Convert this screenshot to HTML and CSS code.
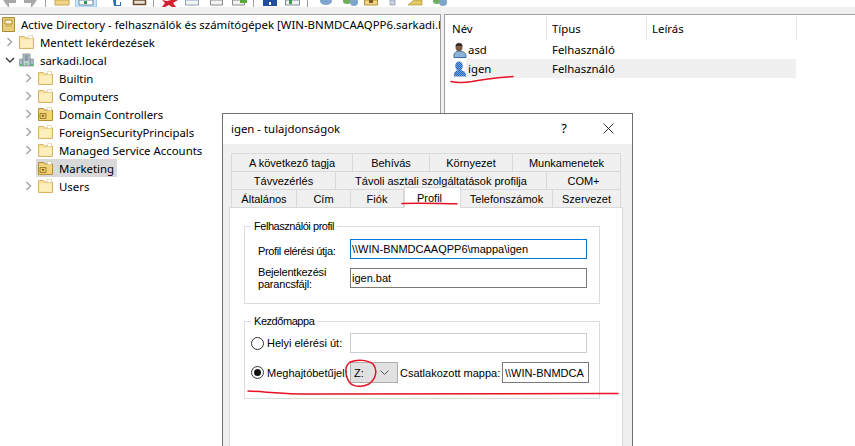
FILE: index.html
```html
<!DOCTYPE html>
<html lang="hu">
<head>
<meta charset="utf-8">
<title>Active Directory</title>
<link rel="stylesheet" href="styles.css">
</head>
<body>
<svg width="0" height="0" class="defs">
  <defs>
    <symbol id="folder" viewBox="0 0 15 14">
      <path d="M.5 13.500V1.500h5l1 1.500h8v10.500z" fill="#f8e19c" stroke="#d6b568"/>
      <path d="M1.500 4.500h12v8h-12z" fill="#fdeebe"/>
      <path d="M9.500 .5h4v3h-4z" fill="#fff" stroke="#dcc995" stroke-width=".6"/>
    </symbol>
    <symbol id="ou" viewBox="0 0 15 14">
      <path d="M.5 13.500V1.500h5l1 1.500h8v10.500z" fill="#f3d27c" stroke="#b68f34"/>
      <path d="M9.500 .5h4v3h-4z" fill="#fff" stroke="#d9c48a" stroke-width=".6"/>
      <path d="M2 6.500h6v5H2z" fill="#e9c967" stroke="#8a6d1f" stroke-width=".8"/>
      <path d="M4 8h2v1.500H4z" fill="#6b5415"/>
    </symbol>
    <symbol id="user" viewBox="0 0 14 16">
      <path d="M1 15.500c-.5-4 1-6 5-6.500 5 0 7.500 2.500 7 6.500z" fill="#8db4d8" stroke="#3f6f9d"/>
      <ellipse cx="6" cy="5" rx="3.500" ry="4.300" fill="#7a5a42"/>
      <path d="M2.500 4.500C2.500 1 9.500 0 9.500 4.500 7 3 5 3.500 2.500 4.500z" fill="#222"/>
    </symbol>
    <pattern id="dither" width="2" height="2" patternUnits="userSpaceOnUse">
      <rect width="2" height="2" fill="#1c64c4"/>
      <rect width="1" height="1" fill="#7aa5d8"/>
      <rect x="1" y="1" width="1" height="1" fill="#7aa5d8"/>
    </pattern>
  </defs>
</svg>

<header class="toolbar">
  <svg class="toolbar-strip" width="460" height="7" viewBox="0 0 460 7">
    <path d="M3 0h13v3H9v4H8z" fill="#a8a8a8"/>
    <path d="M37 0H24v3h7v4h1z" fill="#a8a8a8"/>
    <path d="M45.500 0v7M153.500 0v7M253.500 0v7M307.500 0v7" stroke="#a0a0a0"/>
    <path d="M55 0h14v5H55z" fill="#f1d68a" stroke="#c9a24a"/>
    <path d="M75.500 -1h21v8h-21z" fill="#cce4f7" stroke="#9ccbee"/>
    <path d="M79 0h14v5H79z" fill="#fff" stroke="#6c8aa8"/>
    <path d="M84 1h3v3h-3z" fill="#2c9a4a"/>
    <path d="M113 0h3v5h4V2h1v4h-7z" fill="#2a6db5"/>
    <path d="M133.500 0h12v4.500h-12z" fill="#e9e2d4" stroke="#6e4a2c" stroke-width="1.500"/>
    <path d="M162 0l5 1 4-1h7l-5 3 3 4h-4l-3-2-4 2h-3l3-4z" fill="#d3202c"/>
    <path d="M185.500 0h13v5h-13z" fill="#f3f3f3" stroke="#8aa0b4"/>
    <path d="M210.500 0h12v5h-12z" fill="#f3f3f3" stroke="#8a8a8a"/>
    <path d="M232.500 0h12v5h-12z" fill="#f3f3f3" stroke="#8a8a8a"/>
    <path d="M240 0h7v3h-7z" fill="#58a83c"/>
    <path d="M263 0h14v6h-14z" fill="#1f4e9c"/>
    <path d="M269 2h2v3h-2z" fill="#fff"/>
    <path d="M285.500 0h14v5h-14z" fill="#f3f3f3" stroke="#7a8a9a"/>
    <path d="M289 0h3v4h-3z" fill="#3a9a4a"/>
    <ellipse cx="326" cy="1" rx="6" ry="4" fill="#7ea6cc"/>
    <ellipse cx="347" cy="1" rx="4" ry="3" fill="#6cae5a"/>
    <ellipse cx="354" cy="2" rx="4" ry="4" fill="#7ea6cc"/>
    <path d="M364.500 0h13v5h-13z" fill="#f1d68a" stroke="#b68f34"/>
    <path d="M369 0h4v3h-4z" fill="#7a5a1f"/>
    <path d="M390 0h5v5h-5z" fill="#c8d4e0" stroke="#7a8a9a" stroke-width=".6"/>
    <path d="M408 5l6-5h8v5z" fill="#e4c75e" stroke="#a08a3a" stroke-width=".6"/>
    <ellipse cx="437" cy="1" rx="4" ry="3" fill="#6cae5a"/>
    <ellipse cx="443" cy="2" rx="4" ry="4" fill="#7ea6cc"/>
  </svg>
</header>
<div class="band"></div>

<main class="panes">
  <section class="pane pane-left">
    <ul class="tree">
      <li class="row root"><svg class="ad-icon" width="13" height="15" viewBox="0 0 13 15"><path d="M.5.5h12v14H.5z" fill="#e8cf7a" stroke="#a98c35"/><path d="M3 3h7v4H3z" fill="#fff6cf" stroke="#a98c35"/><path d="M3 9h7" stroke="#c4a84e"/></svg><span class="root-label">Active Directory - felhasználók és számítógépek [WIN-BNMDCAAQPP6.sarkadi.l</span></li>
      <li class="row l1"><svg class="chev" width="7" height="10" viewBox="0 0 7 10"><path d="M1.500 1l4 4-4 4" fill="none" stroke="#a6a6a6" stroke-width="1.500"/></svg><svg class="ico" width="15" height="14"><use href="#folder"/></svg><span class="label">Mentett lekérdezések</span></li>
      <li class="row l1"><svg class="chev down" width="10" height="7" viewBox="0 0 10 7"><path d="M1 1l4 4 4-4" fill="none" stroke="#404040" stroke-width="1.500"/></svg><svg class="ico" width="15" height="14" viewBox="0 0 15 14"><path d="M0 6h4v7H0zM11 6h4v7h-4z" fill="#a9bcc4" stroke="#778a92" stroke-width=".5"/><path d="M4 1h7v12H4z" fill="#c2d0d6" stroke="#66787f" stroke-width=".7"/><path d="M5.500 3h4M5.500 5h4M5.500 7h4" stroke="#5a6a72"/><path d="M1 12h2M12 12h2M6.500 11h2" stroke="#3cc24a" stroke-width="1.500"/></svg><span class="label">sarkadi.local</span></li>
      <li class="row l2"><svg class="chev" width="7" height="10" viewBox="0 0 7 10"><path d="M1.500 1l4 4-4 4" fill="none" stroke="#a6a6a6" stroke-width="1.500"/></svg><svg class="ico" width="15" height="14"><use href="#folder"/></svg><span class="label">Builtin</span></li>
      <li class="row l2"><svg class="chev" width="7" height="10" viewBox="0 0 7 10"><path d="M1.500 1l4 4-4 4" fill="none" stroke="#a6a6a6" stroke-width="1.500"/></svg><svg class="ico" width="15" height="14"><use href="#folder"/></svg><span class="label">Computers</span></li>
      <li class="row l2"><svg class="chev" width="7" height="10" viewBox="0 0 7 10"><path d="M1.500 1l4 4-4 4" fill="none" stroke="#a6a6a6" stroke-width="1.500"/></svg><svg class="ico" width="15" height="14"><use href="#ou"/></svg><span class="label">Domain Controllers</span></li>
      <li class="row l2"><svg class="chev" width="7" height="10" viewBox="0 0 7 10"><path d="M1.500 1l4 4-4 4" fill="none" stroke="#a6a6a6" stroke-width="1.500"/></svg><svg class="ico" width="15" height="14"><use href="#folder"/></svg><span class="label">ForeignSecurityPrincipals</span></li>
      <li class="row l2"><svg class="chev" width="7" height="10" viewBox="0 0 7 10"><path d="M1.500 1l4 4-4 4" fill="none" stroke="#a6a6a6" stroke-width="1.500"/></svg><svg class="ico" width="15" height="14"><use href="#folder"/></svg><span class="label">Managed Service Accounts</span></li>
      <li class="row l2 selected"><span class="chev-space"></span><span class="sel-box"><svg class="ico" width="15" height="14"><use href="#ou"/></svg><span class="label">Marketing</span></span></li>
      <li class="row l2"><svg class="chev" width="7" height="10" viewBox="0 0 7 10"><path d="M1.500 1l4 4-4 4" fill="none" stroke="#a6a6a6" stroke-width="1.500"/></svg><svg class="ico" width="15" height="14"><use href="#folder"/></svg><span class="label">Users</span></li>
    </ul>
  </section>
  <section class="pane pane-right">
    <div class="list-head">
      <span class="col col-name">Név</span>
      <span class="col col-type">Típus</span>
      <span class="col col-desc">Leírás</span>
    </div>
    <div class="list-row">
      <svg class="user-ico" width="14" height="16"><use href="#user"/></svg>
      <span class="cell-name">asd</span><span class="cell-type">Felhasználó</span>
    </div>
    <div class="list-row hot">
      <svg class="user-ico" width="14" height="16" viewBox="0 0 14 16"><path d="M1 15.500c-.5-4 1-6 5-6.500 5 0 7.500 2.500 7 6.500z" fill="url(#dither)"/><ellipse cx="6" cy="5" rx="3.800" ry="4.600" fill="url(#dither)"/></svg>
      <span class="cell-name">igen</span><span class="cell-type">Felhasználó</span>
    </div>
  </section>
</main>

<div class="dialog">
  <div class="titlebar">
    <span class="title">igen - tulajdonságok</span>
    <span class="help">?</span>
    <svg class="close" width="11" height="11" viewBox="0 0 11 11"><path d="M.5.5l10 10M10.500.5l-10 10" stroke="#333" fill="none"/></svg>
  </div>
  <div class="dialog-body">
    <div class="tabs">
      <div class="tab-row r1"><span class="tab">A következő tagja</span><span class="tab">Behívás</span><span class="tab">Környezet</span><span class="tab">Munkamenetek</span></div>
      <div class="tab-row r2"><span class="tab">Távvezérlés</span><span class="tab">Távoli asztali szolgáltatások profilja</span><span class="tab">COM+</span></div>
      <div class="tab-row r3"><span class="tab">Általános</span><span class="tab">Cím</span><span class="tab">Fiók</span><span class="tab active">Profil</span><span class="tab">Telefonszámok</span><span class="tab">Szervezet</span></div>
    </div>
    <div class="panel">
      <fieldset class="group group-profile">
        <legend>Felhasználói profil</legend>
        <div class="field-row first">
          <label class="field-label">Profil elérési útja:</label>
          <input class="input focus" type="text" value="\\WIN-BNMDCAAQPP6\mappa\igen">
        </div>
        <div class="field-row second">
          <label class="field-label two-line">Bejelentkezési<br>parancsfájl:</label>
          <input class="input" type="text" value="igen.bat">
        </div>
      </fieldset>
      <fieldset class="group group-home">
        <legend>Kezdőmappa</legend>
        <div class="home-row first">
          <span class="radio"></span>
          <span class="radio-label">Helyi elérési út:</span>
          <input class="input disabled" type="text">
        </div>
        <div class="home-row second">
          <span class="radio checked"></span>
          <span class="radio-label">Meghajtóbetűjel:</span>
          <span class="combo"><span>Z:</span><svg width="9" height="6" viewBox="0 0 9 6"><path d="M.5.5l4 4 4-4" fill="none" stroke="#555"/></svg></span>
          <span class="map-label">Csatlakozott mappa:</span>
          <input class="input short" type="text" value="\\WIN-BNMDCA">
        </div>
      </fieldset>
    </div>
  </div>
</div>

<svg class="marks" width="855" height="446" viewBox="0 0 855 446">
  <g fill="none" stroke="#e81123" stroke-linecap="round">
    <path d="M451 81.500C458 83 466 82.500 472 81.500 484 79 500 77.500 513 76.500" stroke-width="1.500"/>
    <path d="M402 203.500C420 203 440 203.500 457 203.800" stroke-width="1.500"/>
    <path d="M248 391C268 392 290 394.500 314 394 380 393 500 393 618 393.500" stroke-width="1.500"/>
    <path d="M350 362C358 359 368 360 373 364 378 370 376 379 369 384 361 388 351 387 348 380 345 373 345 366 350 362z" stroke-width="1.500"/>
  </g>
</svg>
</body>
</html>
```
FILE: styles.css
```css
* { box-sizing: border-box; }
html, body { margin: 0; padding: 0; }
body {
  width: 855px;
  height: 446px;
  overflow: hidden;
  position: relative;
  background: #fff;
  font-family: "Noto Sans", sans-serif;
  font-size: 11.400px;
  color: #000;
}
.defs { position: absolute; }
.toolbar { height: 7px; background: #fff; overflow: hidden; }
.toolbar-strip { display: block; }
.band { height: 7px; background: #f0f0f0; }
.panes {
  display: flex;
  height: 432px;
  background: #f0f0f0;
}
.pane {
  background: #fff;
  border-top: 1px solid #a0a0a0;
  overflow: hidden;
}
.pane-left { width: 441px; border-right: 1px solid #a0a0a0; }
.pane-right {
  width: 411px;
  margin-left: 3px;
  flex: 1;
  border-left: 1px solid #a0a0a0;
  padding-top: 1px;
}
.tree { list-style: none; margin: 0; padding: 0; }
.row { height: 18px; display: flex; align-items: center; white-space: nowrap; }
.root { padding-left: 2px; }
.ad-icon { flex: none; }
.root-label { margin-left: 6px; }
.l1 { padding-left: 6px; }
.l2 { padding-left: 25px; }
.chev { flex: none; width: 7px; }
.chev.down { width: 10px; margin-left: -1px; margin-right: -2px; }
.chev-space { width: 7px; flex: none; }
.ico { flex: none; margin-left: 6px; }
.label { margin-left: 6px; }
.sel-box {
  display: flex;
  align-items: center;
  height: 18px;
  margin-left: 4px;
  padding-right: 3px;
  background: #d9d9d9;
}
.sel-box .ico { margin-left: 2px; }
.list-head { position: relative; height: 24px; display: flex; }
.col {
  display: flex;
  align-items: center;
  padding-left: 7px;
  height: 24px;
  border-right: 1px solid #e5e5e5;
}
.col-name { width: 102px; }
.col-type { width: 100px; padding-left: 5px; }
.col-desc { width: 150px; padding-left: 5px; }
.list-row {
  height: 19px;
  display: flex;
  align-items: center;
  padding-left: 8px;
  width: 351px;
}
.list-row.hot { background: linear-gradient(to right, #fff 21px, #f0f0f0 21px); }
.user-ico { flex: none; }
.cell-name { width: 84px; margin-left: 1px; }
.cell-type { flex: none; }

.dialog {
  position: absolute;
  left: 222px;
  top: 113px;
  width: 411px;
  height: 333px;
  background: #f0f0f0;
  border: 1px solid #6f6f6f;
  border-bottom: 0;
  overflow: hidden;
  font-family: "Liberation Sans", Arial, sans-serif;
  font-size: 11px;
}
.titlebar {
  height: 30px;
  padding: 0 0 2px 8px;
  background: #fff;
  display: flex;
  align-items: center;
  font-family: "Noto Sans", sans-serif;
}
.title { font-size: 11.400px; flex: 1; }
.help { font-size: 13px; margin-right: 36px; }
.close { margin-right: 18px; }
.dialog-body { padding: 9px 0 0 6px; }
.tabs { padding-left: 2px; width: 392px; }
.tab-row { display: grid; height: 18px; }
.r1 { grid-template-columns: 122px 77px 83px 108px; }
.r2 { grid-template-columns: 105px 211px 74px; }
.r3 { grid-template-columns: 66px 54px 53px 57px 92px 68px; }
.tab {
  display: flex;
  align-items: center;
  justify-content: center;
  background: #f0f0f0;
  border: 1px solid #d9d9d9;
  border-bottom: 0;
  border-left-width: 0;
  white-space: nowrap;
}
.tab:first-child { border-left-width: 1px; }
.tab.active {
  background: #fff;
  margin-top: -2px;
  margin-bottom: -1px;
  padding-right: 6px;
  border-left-width: 1px;
  border-bottom: 0;
  position: relative;
}
.panel {
  width: 394px;
  height: 240px;
  background: #fff;
  border: 1px solid #d9d9d9;
  border-bottom: 0;
  padding: 11px 22px 0 14px;
}
.group {
  margin: 0 0 10px;
  padding: 5px 0 0;
  height: 85px;
  border: 1px solid #dcdcdc;
  min-width: 0;
}
.group-profile { padding-top: 6px; }
.group legend {
  margin-left: 6px;
  padding: 0 3px;
  line-height: 14px;
  letter-spacing: -0.45px;
}
.field-row { display: flex; align-items: center; padding-left: 13px; }
.field-row.first { height: 20px; }
.field-row.second { height: 20px; margin-top: 9px; }
.field-label { width: 92px; flex: none; white-space: nowrap; }
.field-row.first .field-label { padding-top: 4px; letter-spacing: -0.35px; }
.two-line { line-height: 12px; letter-spacing: -0.2px; }
.input {
  font: inherit;
  color: #000;
  width: 237px;
  height: 20px;
  margin: 0;
  padding: 0 1px;
  border: 1px solid #7a7a7a;
  background: #fff;
  outline: 0;
  flex: none;
}
.input.focus { border-color: #0078d7; }
.input.disabled { border-color: #cccccc; }
.input.short { width: 87px; height: 21px; padding: 0 2px; }
.home-row { display: flex; align-items: center; padding-left: 6px; }
.home-row.first { height: 20px; }
.home-row.second { height: 21px; margin-top: 9px; }
.radio {
  width: 13px;
  height: 13px;
  border-radius: 50%;
  border: 1px solid #333;
  background: #fff;
  flex: none;
  position: relative;
}
.radio.checked::after {
  content: "";
  position: absolute;
  left: 2px;
  top: 2px;
  width: 7px;
  height: 7px;
  border-radius: 50%;
  background: #111;
}
.radio-label { width: 83px; margin-left: 3px; flex: none; white-space: nowrap; }
.combo {
  width: 48px;
  height: 21px;
  flex: none;
  display: flex;
  align-items: center;
  justify-content: space-between;
  padding: 0 8px 0 3px;
  background: #e1e1e1;
  border: 1px solid #adadad;
}
.map-label { width: 102px; flex: none; margin-left: 2px; white-space: nowrap; }
.marks { position: absolute; left: 0; top: 0; pointer-events: none; }
```
